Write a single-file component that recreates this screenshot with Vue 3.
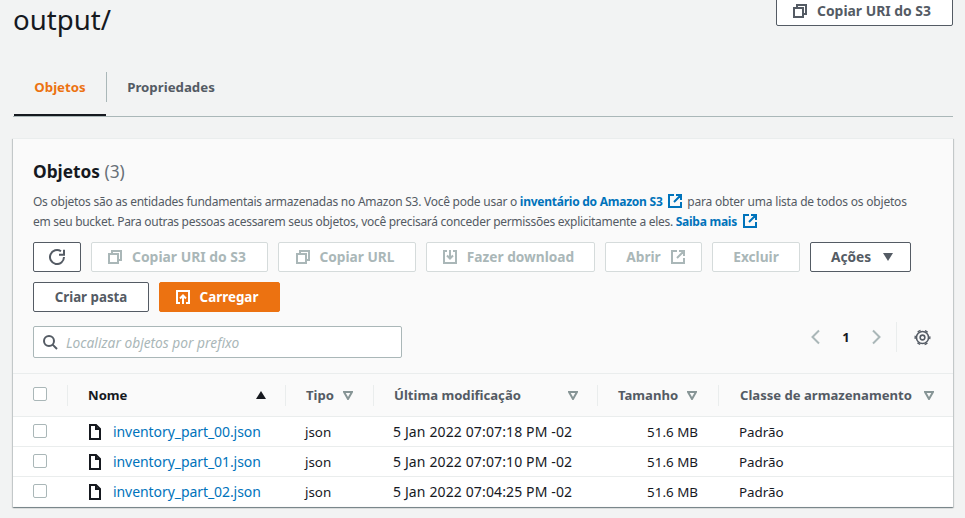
<script setup>
const columns = [
  { label: 'Tipo', sort: true },
  { label: 'Última modificação', sort: true, spread: true },
  { label: 'Tamanho', sort: true },
  { label: 'Classe de armazenamento', sort: true, spread: true }
];

const rows = [
  { name: 'inventory_part_00.json', modified: '5 Jan 2022 07:07:18 PM -02' },
  { name: 'inventory_part_01.json', modified: '5 Jan 2022 07:07:10 PM -02' },
  { name: 'inventory_part_02.json', modified: '5 Jan 2022 07:04:25 PM -02' }
];
</script>

<template>
  <div class="page">
    <header class="page-header">
      <h1>output/</h1>
      <button class="btn top-copy">
        <svg class="icon" viewBox="0 0 16 16"><path d="M5 5V2h9v9h-3M2 5h9v9H2z" /></svg>
        Copiar URI do S3
      </button>
    </header>

    <nav class="tabs">
      <a class="tab active">Objetos</a>
      <a class="tab">Propriedades</a>
    </nav>

    <section class="card">
      <div class="card-head">
        <h2>Objetos <span class="count">(3)</span></h2>
        <p class="desc">
          Os objetos são as entidades fundamentais armazenadas no Amazon S3. Você pode usar o
          <a class="link">inventário do Amazon S3 <svg class="icon ext" viewBox="0 0 16 16"><path d="M14 9v5H2V2h5M9 2h5v5M14 2L7 9" /></svg></a> <span class="after-link">para obter uma lista de todos os objetos</span> <span class="second-line">em seu bucket. Para outras pessoas acessarem seus objetos,
          você precisará conceder permissões explicitamente a eles.</span> <a class="link">Saiba mais <svg class="icon ext" viewBox="0 0 16 16"><path d="M14 9v5H2V2h5M9 2h5v5M14 2L7 9" /></svg></a>
        </p>

        <div class="toolbar">
          <button class="btn refresh" aria-label="Atualizar">
            <svg class="icon" viewBox="0 0 16 16"><path d="M15 8a7 7 0 1 1-3-5.700M15 .8v5h-5" /></svg>
          </button>
          <button class="btn off w-uri">
            <svg class="icon" viewBox="0 0 16 16"><path d="M5 5V2h9v9h-3M2 5h9v9H2z" /></svg>
            Copiar URI do S3
          </button>
          <button class="btn off w-url">
            <svg class="icon" viewBox="0 0 16 16"><path d="M5 5V2h9v9h-3M2 5h9v9H2z" /></svg>
            Copiar URL
          </button>
          <button class="btn off w-down">
            <svg class="icon" viewBox="0 0 16 16"><path d="M5 2H2v12h12V2h-3M8 1v8M5 6.500l3 3 3-3" /></svg>
            Fazer download
          </button>
          <button class="btn off w-open">
            Abrir
            <svg class="icon" viewBox="0 0 16 16"><path d="M14 9v5H2V2h5M9 2h5v5M14 2L7 9" /></svg>
          </button>
          <button class="btn off w-del">Excluir</button>
          <button class="btn w-act">
            Ações
            <span class="caret"></span>
          </button>
          <button class="btn w-new">Criar pasta</button>
          <button class="btn primary">
            <svg class="icon" viewBox="0 0 16 16"><path d="M5 14H2V2h12v12h-3M8 15V7M5 9.500l3-3 3 3" /></svg>
            Carregar
          </button>
        </div>

        <div class="filter-row">
          <label class="search">
            <svg class="icon" viewBox="0 0 16 16"><circle cx="7" cy="7" r="5" /><path d="M10.600 10.600L15 15" /></svg>
            <span>Localizar objetos por prefixo</span>
          </label>
          <div class="pager">
            <svg class="chev" viewBox="0 0 16 16"><path d="M11 1.500L4.500 8l6.500 6.500" /></svg>
            <span class="page-num">1</span>
            <svg class="chev" viewBox="0 0 16 16"><path d="M5 1.500L11.500 8 5 14.500" /></svg>
            <span class="pager-sep"></span>
            <svg class="gear" viewBox="0 0 16 16">
              <circle cx="8" cy="8" r="2.200" />
              <circle cx="8" cy="8" r="5.700" />
              <circle class="teeth" cx="8" cy="8" r="6.900" />
            </svg>
          </div>
        </div>
      </div>

      <div class="grid head">
        <div class="cell check"><span class="box"></span></div>
        <div class="cell name-head">
          <span>Nome</span>
          <span class="sort-up"></span>
        </div>
        <div
          v-for="col in columns"
          :key="col.label"
          class="cell"
          :class="{ spread: col.spread }"
        >
          <span>{{ col.label }}</span>
          <svg class="sort" viewBox="0 0 10 9"><path d="M1 1h8L5 8z" /></svg>
        </div>
      </div>

      <div v-for="row in rows" :key="row.name" class="grid row">
        <div class="cell check"><span class="box"></span></div>
        <div class="cell file">
          <svg class="doc" viewBox="0 0 14 18"><path d="M2 2h6l4 4v10H2zM8 2v4h4" /></svg>
          <a class="file-link">{{ row.name }}</a>
        </div>
        <div class="cell">json</div>
        <div class="cell date">{{ row.modified }}</div>
        <div class="cell size">51.6 MB</div>
        <div class="cell">Padrão</div>
      </div>
    </section>
  </div>
</template>

<style>
html,
body {
  background: #f2f3f3;
  overflow: hidden;
}
</style>

<style scoped>
.page {
  height: 518px;
  padding: 0 12px 0 13px;
  box-sizing: border-box;
  font-family: "Noto Sans", sans-serif;
  font-size: 14px;
  color: #16191f;
  overflow: hidden;
}

.page-header {
  display: flex;
  justify-content: space-between;
  align-items: flex-start;
  height: 68px;
  margin-top: -4px;
}

h1 {
  margin: 0;
  padding-top: 5px;
  font-size: 27.600px;
  font-weight: 400;
  line-height: 36px;
}

.btn {
  display: inline-flex;
  align-items: center;
  justify-content: center;
  gap: 9px;
  height: 30px;
  padding: 0;
  box-sizing: border-box;
  background: #fff;
  border: 1px solid #545b64;
  border-radius: 2px;
  color: #545b64;
  font-family: inherit;
  font-size: 13.700px;
  font-weight: 700;
  line-height: 20px;
  white-space: nowrap;
}

.icon {
  width: 16px;
  height: 16px;
  flex: none;
  fill: none;
  stroke: currentColor;
  stroke-width: 2;
}

.top-copy {
  width: 177px;
  padding-right: 6px;
  font-size: 13.900px;
}

.btn.off {
  border-color: #d5dbdb;
  color: #aab7b8;
  padding-right: 5px;
}

.btn.primary {
  width: 121px;
  padding-right: 6px;
  background: #ec7211;
  border-color: #ec7211;
  color: #fff;
  font-size: 13.400px;
}

.refresh { width: 48px; }
.btn.w-uri { width: 177px; padding-right: 6px; font-size: 13.900px; }
.w-url { width: 138px; }
.w-down { width: 169px; }
.btn.w-open { width: 97px; padding: 0 0 0 5px; }
.btn.w-del { width: 88px; padding: 0; }
.w-act { width: 101px; gap: 12px; padding-left: 3px; }
.w-new { width: 116px; font-size: 13.300px; }

.caret {
  width: 0;
  height: 0;
  border-left: 5.500px solid transparent;
  border-right: 5.500px solid transparent;
  border-top: 8px solid #545b64;
}

.tabs {
  display: flex;
  height: 52px;
  border-bottom: 1px solid #aab7b8;
  font-size: 13.250px;
  font-weight: 700;
  margin-bottom: 21px;
}

.tab {
  display: flex;
  align-items: center;
  justify-content: center;
  color: #545b64;
}

.tab.active {
  position: relative;
  width: 92px;
  height: 52px;
  margin-left: 1px;
  padding-bottom: 4px;
  box-sizing: border-box;
  border-bottom: 2px solid #16191f;
  color: #ec7211;
}

.tab.active::after {
  content: "";
  position: absolute;
  right: -1px;
  top: 8px;
  height: 30px;
  border-right: 1px solid #aab7b8;
}

.tab + .tab {
  width: 130px;
  height: 46px;
}

.card {
  width: 940px;
  height: 369px;
  box-sizing: border-box;
  background: #fafafa;
  border-top: 1px solid #eaeded;
  box-shadow: 0 1px 1px 0 rgba(0, 28, 36, 0.3), 1px 1px 1px 0 rgba(0, 28, 36, 0.15), -1px 1px 1px 0 rgba(0, 28, 36, 0.15);
}

.card-head {
  height: 234px;
  padding: 20px 20px 0;
  box-sizing: border-box;
}

h2 {
  margin: 0;
  font-size: 17.300px;
  font-weight: 700;
  line-height: 26px;
}

.count {
  font-weight: 400;
  color: #687078;
}

.desc {
  margin: 7px 0 10px;
  width: 885px;
  height: 40px;
  font-size: 12px;
  letter-spacing: -0.25px;
  line-height: 20px;
  color: #545b64;
}

.after-link {
  margin-left: 1px;
  letter-spacing: -0.2px;
}

.second-line {
  letter-spacing: -0.29px;
}

.link {
  color: #0073bb;
  font-weight: 700;
  white-space: nowrap;
}

.ext {
  margin-left: 2px;
  vertical-align: -3px;
}

.toolbar {
  display: flex;
  flex-wrap: wrap;
  gap: 10px;
}

.filter-row {
  display: flex;
  justify-content: space-between;
  margin-top: 14px;
}

.search {
  display: flex;
  align-items: center;
  gap: 8px;
  width: 369px;
  height: 32px;
  padding-left: 8px;
  box-sizing: border-box;
  background: #fff;
  border: 1px solid #aab7b8;
  border-radius: 2px;
  color: #545b64;
}

.search span {
  font-size: 13.750px;
  font-style: italic;
  color: #aab7b8;
}

.pager {
  display: flex;
  align-items: center;
  height: 30px;
  margin-top: -4px;
  margin-right: 2px;
}

.chev {
  width: 16px;
  height: 20px;
  fill: none;
  stroke: #aab7b8;
  stroke-width: 2;
}

.page-num {
  width: 44px;
  text-align: center;
  font-size: 13px;
  font-weight: 700;
}

.pager-sep {
  width: 1px;
  height: 30px;
  margin: 0 17px 0 12px;
  background: #eaeded;
}

.gear {
  width: 17px;
  height: 17px;
  fill: none;
  stroke: #545b64;
  stroke-width: 1.500;
}

.teeth {
  stroke-width: 1.300;
  stroke-dasharray: 3 4.230;
  stroke-dashoffset: 1.500;
}

.grid {
  display: grid;
  grid-template-columns: 54px 218px 88px 224px 121px 1fr;
  box-sizing: border-box;
  border-top: 1px solid #eaeded;
}

.head {
  height: 43px;
  font-size: 13.100px;
  font-weight: 700;
  color: #545b64;
}

.row {
  height: 30px;
  background: #fff;
  font-size: 13.400px;
}

.cell {
  display: flex;
  align-items: center;
  gap: 9px;
  min-width: 0;
  padding-left: 21px;
  white-space: nowrap;
}

.row .cell {
  padding-left: 20px;
}

.row .cell:last-child {
  padding-left: 21px;
}

.head .cell {
  position: relative;
}

.head .cell:last-child {
  padding-left: 22px;
}

.head .cell:not(:last-child)::after {
  content: "";
  position: absolute;
  right: -1px;
  top: 11px;
  height: 21px;
  border-right: 1px solid #eaeded;
}

.row .check,
.head .check {
  padding-left: 20px;
  padding-bottom: 2px;
}

.box {
  display: block;
  width: 14px;
  height: 14px;
  box-sizing: border-box;
  background: #fff;
  border: 1px solid #aab7b8;
  border-radius: 2px;
}

.name-head {
  justify-content: space-between;
  padding-right: 19px;
  color: #16191f;
}

.sort-up {
  width: 0;
  height: 0;
  border-left: 5px solid transparent;
  border-right: 5px solid transparent;
  border-bottom: 8px solid #16191f;
}

.spread {
  justify-content: space-between;
  padding-right: 19px;
}

.sort {
  width: 10px;
  height: 9px;
  flex: none;
  fill: none;
  stroke: #879596;
  stroke-width: 2;
}

.row .file {
  gap: 11px;
  padding-left: 21px;
}

.doc {
  width: 14px;
  height: 18px;
  flex: none;
  fill: none;
  stroke: #16191f;
  stroke-width: 2;
}

.file-link {
  color: #0073bb;
  font-size: 14px;
  letter-spacing: -0.07px;
}

.date {
  font-size: 14px;
  letter-spacing: 0.13px;
}

.row .size {
  justify-content: flex-end;
  padding-right: 20px;
}
</style>
